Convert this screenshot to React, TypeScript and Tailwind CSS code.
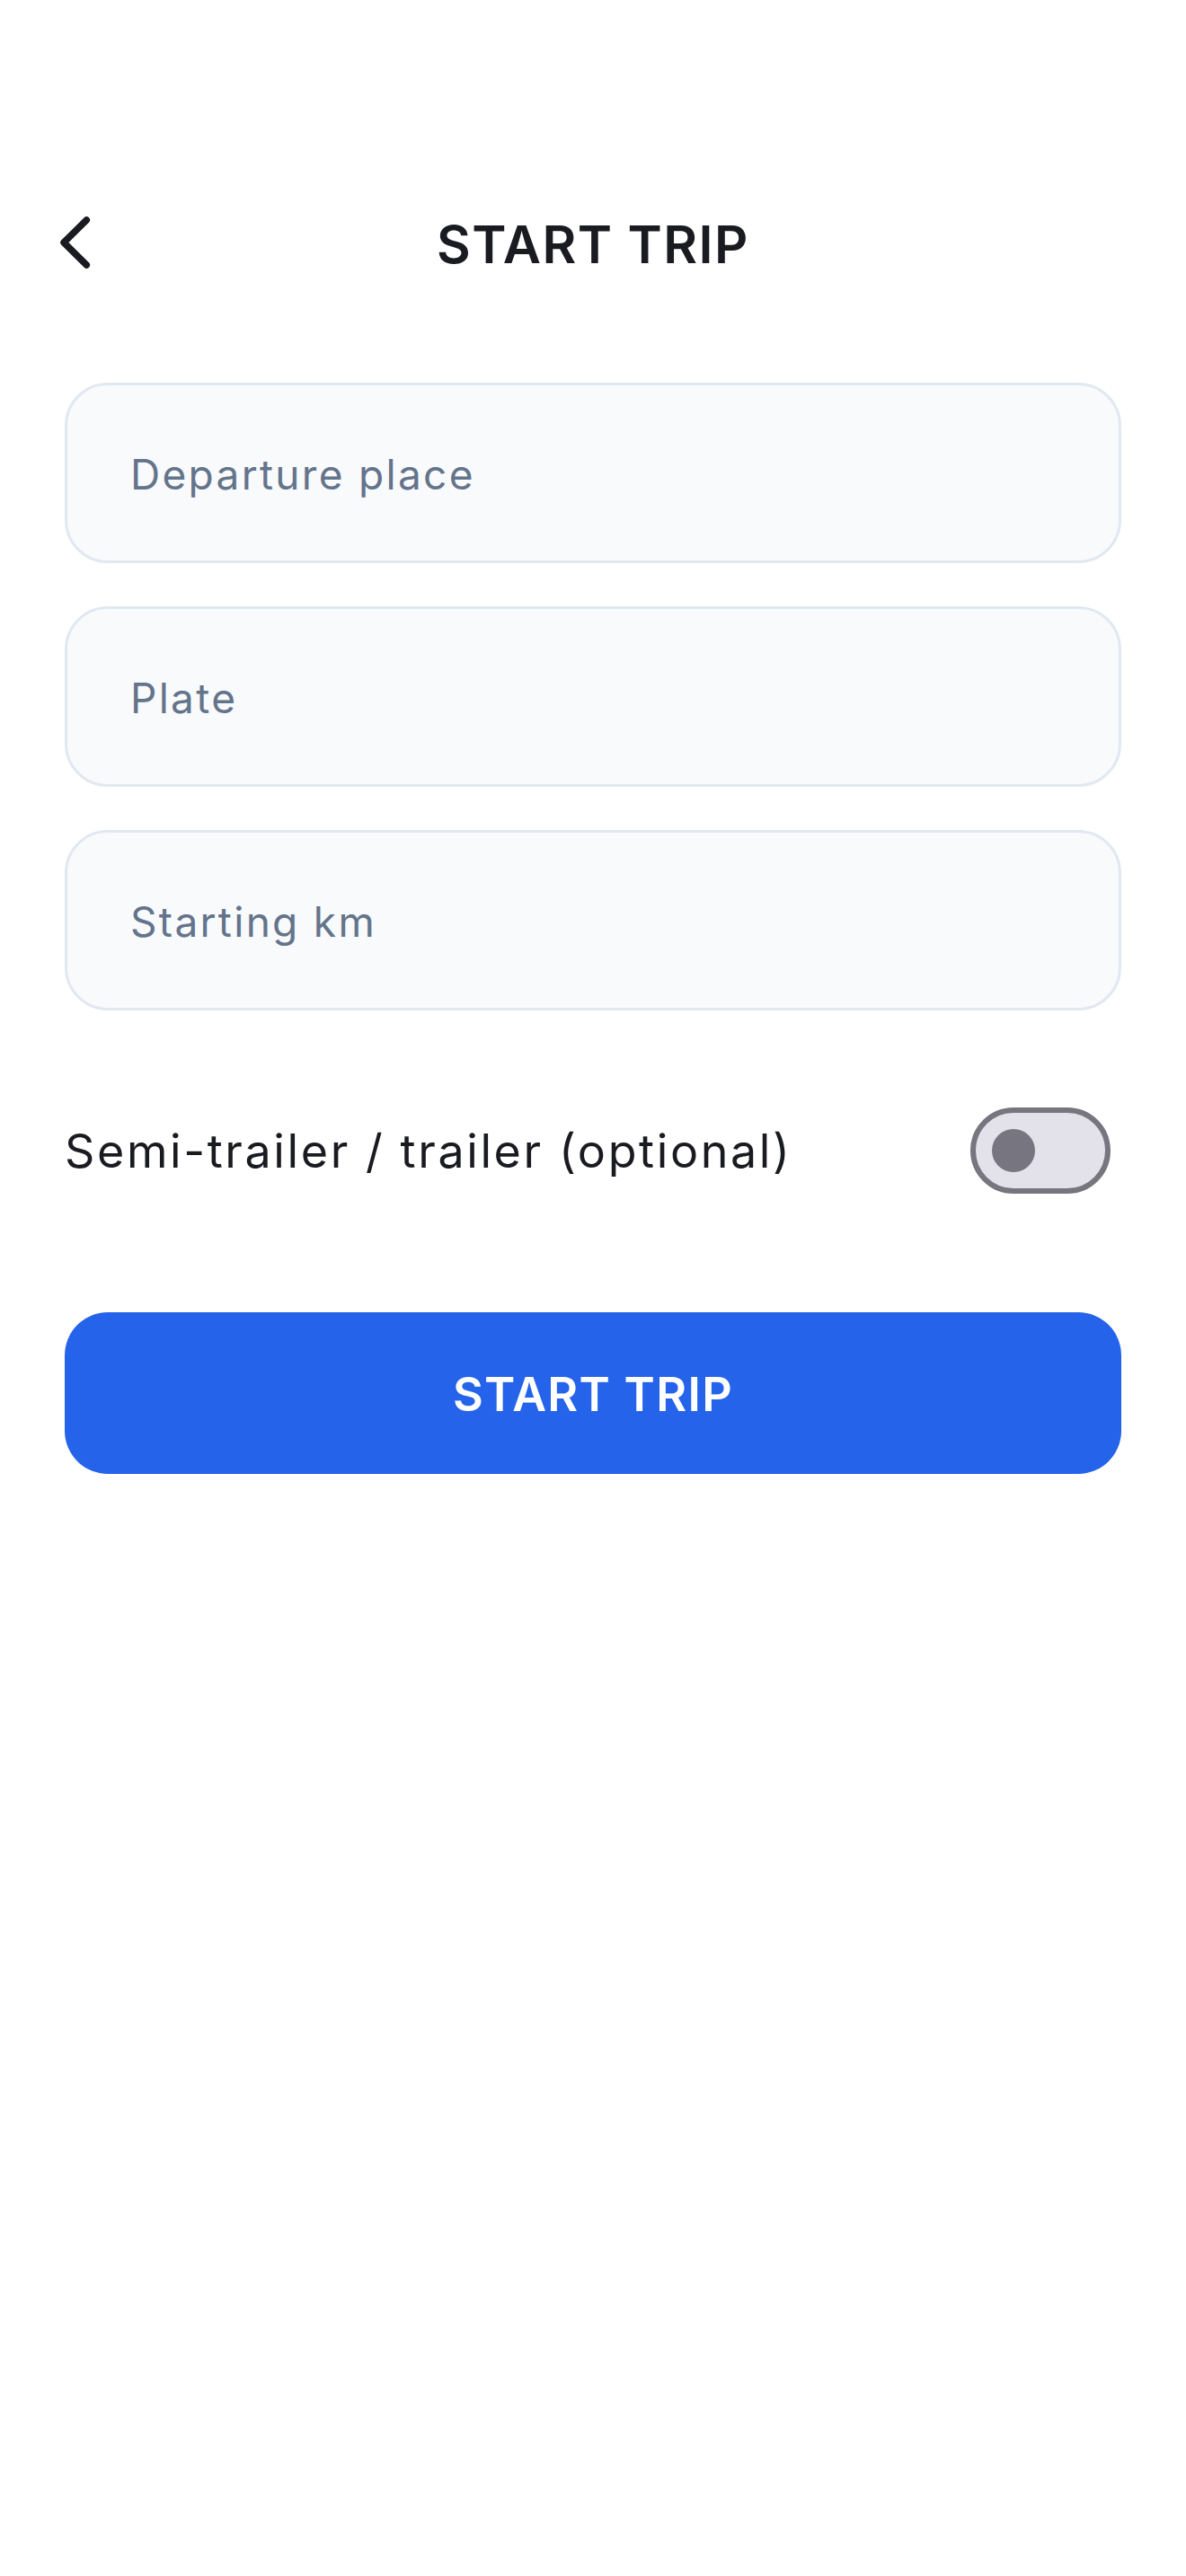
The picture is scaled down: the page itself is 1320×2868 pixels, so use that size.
function Field({ id, label }: { id: string; label: string }) {
  return (
    <input
      id={id}
      type="text"
      aria-label={label}
      placeholder={label}
      className="block w-full h-[201px] rounded-[48px] border-3 border-[#e2e8f0] bg-[#f8fafc] px-[70px] pt-0.5 text-[46px] tracking-wider text-[#1a1b21] placeholder:text-[#64748b] outline-none"
    />
  );
}

export default function App() {
  return (
    <main className="min-h-screen bg-white px-18 pt-[192px] font-['Inter',sans-serif] text-[#1a1b21]">
      <header className="grid h-[156px] grid-cols-[1fr_auto_1fr] items-center">
        <button type="button" aria-label="Back" className="-ml-6 w-24">
          <svg className="size-24" viewBox="0 0 96 96" fill="none" stroke="currentColor" strokeWidth="7.5" strokeLinecap="round" strokeLinejoin="round">
            <path d="M48.3 23 L23 48 L48.3 73" />
          </svg>
        </button>
        <h1 className="pt-1 text-[58px] font-semibold tracking-wide">START TRIP</h1>
      </header>

      <form className="mt-[78px]">
        <div className="flex flex-col gap-12">
          <Field id="departure" label="Departure place" />
          <Field id="plate" label="Plate" />
          <Field id="km" label="Starting km" />
        </div>

        <div className="mt-[84px] flex h-[144px] items-center justify-between pr-3">
          <label htmlFor="trailer" className="pt-0.5 text-[52px] tracking-wider">Semi-trailer / trailer (optional)</label>
          <div className="relative h-24 w-[156px]">
            <input id="trailer" type="checkbox" role="switch" className="peer block size-full appearance-none rounded-full border-6 border-[#777680] bg-[#e3e1e9]" />
            <span className="pointer-events-none absolute left-6 top-6 size-12 rounded-full bg-[#777680] peer-checked:left-[84px]" />
          </div>
        </div>

        <button type="button" className="mt-[108px] h-[180px] w-full rounded-[48px] bg-[#2563eb] pt-1 text-[52px] font-semibold tracking-wide text-white">START TRIP</button>
      </form>
    </main>
  );
}
